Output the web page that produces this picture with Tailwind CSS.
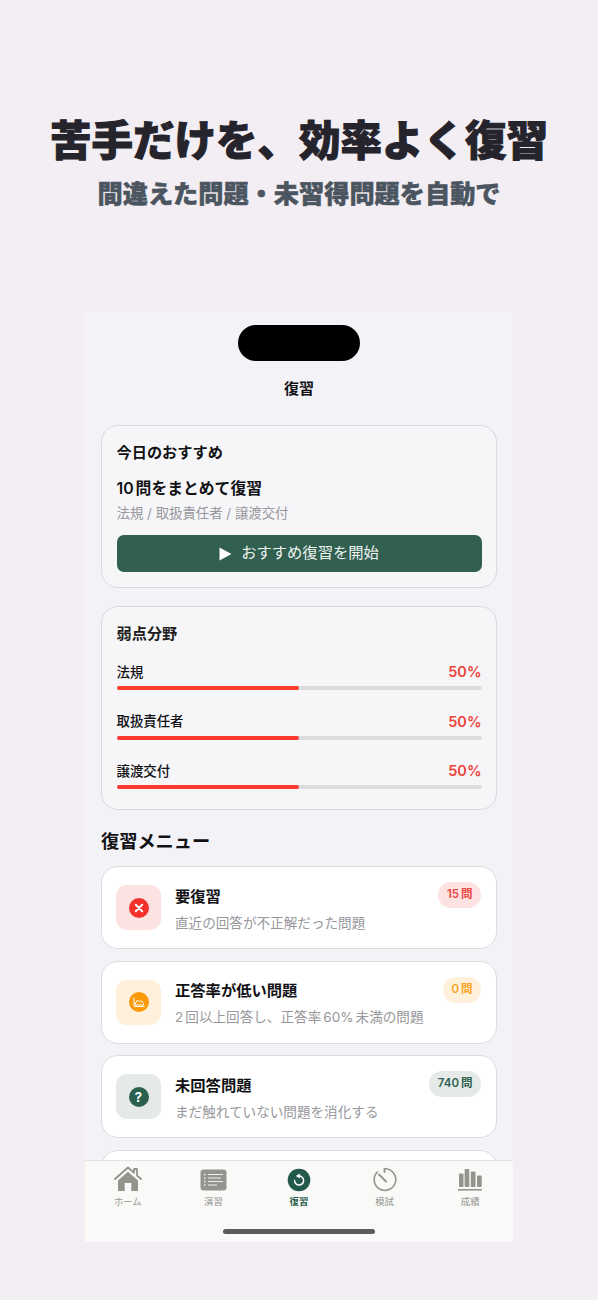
<!DOCTYPE html>
<html lang="ja">
<head>
    <meta charset="UTF-8">
    <meta name="viewport" content="width=device-width, initial-scale=1.0">
    <title>復習</title>
    <script src="https://cdn.jsdelivr.net/npm/@tailwindcss/browser@4"></script>
</head>
<body class="bg-[#f3eef3] font-['Inter','Noto_Sans_CJK_JP',sans-serif] text-[#111114]">
<div class="w-[598px] h-[1300px] overflow-hidden flex flex-col items-center">

    <!-- headline -->
    <h1 class="mt-[108px] h-[60px] leading-[60px] text-[41.5px] font-black text-[#25232b] whitespace-nowrap [-webkit-text-stroke:1px_#25232b] [stroke-linejoin:round] font-['Noto_Sans_CJK_JP',sans-serif]">苦手だけを、効率よく復習</h1>
    <p class="mt-[9px] h-[30px] leading-[30px] text-[25.2px] font-black text-[#4b555f] whitespace-nowrap [-webkit-text-stroke:0.5px_#4b555f] [stroke-linejoin:round] font-['Noto_Sans_CJK_JP',sans-serif]">間違えた問題・未習得問題を自動で</p>

    <!-- phone -->
    <div class="relative mt-[105px] w-[428px] h-[930px] bg-[#f2f2f7] overflow-hidden flex flex-col items-center">
        <div class="mt-[13px] w-[122px] h-[36px] rounded-full bg-black shrink-0"></div>
        <div class="mt-[17px] h-[22px] leading-[22px] text-[15px] font-semibold">復習</div>

        <div class="mt-[25px] w-[396px] flex flex-col">
            <!-- recommend -->
            <section class="h-[163px] rounded-[17px] border border-[#d9d9de] bg-[#f6f6f9] px-[14.5px] pt-[16px]">
                <h2 class="h-[22px] leading-[22px] text-[15.2px] font-semibold">今日のおすすめ</h2>
                <p class="mt-[14px] h-[22px] leading-[22px] text-[15.8px] font-semibold">10<span class="ml-[2px]">問をまとめて復習</span></p>
                <p class="mt-[3px] h-[20px] leading-[20px] text-[13.4px] text-[#97979c]">法規 / 取扱責任者 / 譲渡交付</p>
                <button class="mt-[12px] w-full h-[37px] rounded-[7px] bg-[#315f50] text-[#eef3f0] text-[15.3px] flex items-center justify-center gap-[8px]">
                    <svg width="13" height="14" viewBox="0 0 13 14" class="mr-[1px]"><path d="M0.5 0.5 L12.5 7 L0.5 13.5 Z" fill="#fff"/></svg>
                    おすすめ復習を開始
                </button>
            </section>

            <!-- weak fields -->
            <section class="mt-[18px] h-[204px] rounded-[17px] border border-[#d9d9de] bg-[#f6f6f9] px-[14.5px] pt-[16px]">
                <h2 class="h-[22px] leading-[22px] text-[15.2px] font-semibold text-[#1d1d20]">弱点分野</h2>
                <div class="mt-[17px] flex flex-col gap-[21.5px]">
                    <div>
                        <div class="flex justify-between items-center h-[20px]"><span class="text-[13.4px] font-medium">法規</span><span class="text-[14.5px] font-semibold text-[#ef4238]">50%</span></div>
                        <div class="mt-[4px] h-[4px] rounded-full bg-[#dcdcdf]"><div class="h-full w-1/2 rounded-full bg-[#fb3a30]"></div></div>
                    </div>
                    <div>
                        <div class="flex justify-between items-center h-[20px]"><span class="text-[13.4px] font-medium">取扱責任者</span><span class="text-[14.5px] font-semibold text-[#ef4238]">50%</span></div>
                        <div class="mt-[4px] h-[4px] rounded-full bg-[#dcdcdf]"><div class="h-full w-1/2 rounded-full bg-[#fb3a30]"></div></div>
                    </div>
                    <div>
                        <div class="flex justify-between items-center h-[20px]"><span class="text-[13.4px] font-medium">譲渡交付</span><span class="text-[14.5px] font-semibold text-[#ef4238]">50%</span></div>
                        <div class="mt-[4px] h-[4px] rounded-full bg-[#dcdcdf]"><div class="h-full w-1/2 rounded-full bg-[#fb3a30]"></div></div>
                    </div>
                </div>
            </section>

            <h2 class="mt-[17px] h-[28px] leading-[28px] text-[18.2px] font-semibold">復習メニュー</h2>

            <!-- menu rows -->
            <div class="mt-[11px] flex flex-col gap-[11.5px]">
                <div class="relative h-[83px] rounded-[17px] border border-[#dcdce1] bg-white pl-[14px] flex items-center gap-[14px]">
                    <div class="w-[45px] h-[45px] rounded-[11px] bg-[#fde2e2] flex items-center justify-center shrink-0">
                        <svg width="20" height="20" viewBox="0 0 20 20"><circle cx="10" cy="10" r="10" fill="#f2312c"/><path d="M6.8 6.8 L13.2 13.2 M13.2 6.8 L6.8 13.2" stroke="#fff" stroke-width="2" stroke-linecap="round"/></svg>
                    </div>
                    <div class="flex flex-col pt-[3px]">
                        <span class="h-[22px] leading-[22px] text-[15.3px] font-semibold">要復習</span>
                        <span class="mt-[5px] h-[20px] leading-[20px] text-[13.6px] text-[#97979c]">直近の回答が不正解だった問題</span>
                    </div>
                    <span class="absolute right-[15px] top-[15px] h-[26px] px-[8.5px] rounded-full bg-[#fde2e2] text-[#ea4741] text-[11.5px] font-semibold flex items-center">15<span class="ml-[2px]">問</span></span>
                </div>

                <div class="relative h-[83px] rounded-[17px] border border-[#dcdce1] bg-white pl-[14px] flex items-center gap-[14px]">
                    <div class="w-[45px] h-[45px] rounded-[11px] bg-[#fff0dc] flex items-center justify-center shrink-0">
                        <svg width="20" height="20" viewBox="0 0 20 20"><circle cx="10" cy="10" r="10" fill="#fb9a09"/><path d="M5 5.5 V14.5 H15.5 M6.5 11 L8.5 8 L10.5 10 L12 8.5 L14.5 11.5 V13 H6.5 Z" stroke="#fff" stroke-width="1" fill="none" stroke-linejoin="round"/></svg>
                    </div>
                    <div class="flex flex-col pt-[3px]">
                        <span class="h-[22px] leading-[22px] text-[15.3px] font-semibold">正答率が低い問題</span>
                        <span class="mt-[5px] h-[20px] leading-[20px] text-[13.6px] text-[#97979c]">2<span class="ml-[2px]">回以上回答し、正答率</span><span class="mx-[2px]">60%</span>未満の問題</span>
                    </div>
                    <span class="absolute right-[15px] top-[15px] h-[26px] px-[8.5px] rounded-full bg-[#fff0dc] text-[#f5a623] text-[11.5px] font-semibold flex items-center">0<span class="ml-[2px]">問</span></span>
                </div>

                <div class="relative h-[83px] rounded-[17px] border border-[#dcdce1] bg-white pl-[14px] flex items-center gap-[14px]">
                    <div class="w-[45px] h-[45px] rounded-[11px] bg-[#e5eae8] flex items-center justify-center shrink-0">
                        <div class="w-[20px] h-[20px] rounded-full bg-[#2b5f4e] text-white text-[13px] leading-[20px] font-bold text-center">?</div>
                    </div>
                    <div class="flex flex-col pt-[3px]">
                        <span class="h-[22px] leading-[22px] text-[15.3px] font-semibold">未回答問題</span>
                        <span class="mt-[5px] h-[20px] leading-[20px] text-[13.6px] text-[#97979c]">まだ触れていない問題を消化する</span>
                    </div>
                    <span class="absolute right-[15px] top-[15px] h-[26px] px-[8.5px] rounded-full bg-[#e5eae8] text-[#315f50] text-[11.5px] font-semibold flex items-center">740<span class="ml-[2px]">問</span></span>
                </div>

                <div class="h-[83px] rounded-[17px] border border-[#dcdce1] bg-white"></div>
            </div>
        </div>

        <!-- tab bar -->
        <nav class="absolute left-0 bottom-0 w-full h-[82px] bg-[#f9f9f8] border-t border-[#e3e3e6]">
            <div class="grid grid-cols-5 pt-[5px]">
                <div class="flex flex-col items-center">
                    <svg width="28" height="26" viewBox="0 0 28 26"><path d="M1 13 L14 1.5 L20 6.8 V3 H23 V9.5 L27 13" stroke="#94948c" stroke-width="1.8" fill="none" stroke-linejoin="round" stroke-linecap="round"/><path d="M4 14.5 L14 5.8 L24 14.5 V25 H4 Z M10.7 17 V25 H17.3 V17 Z" fill="#94948c" fill-rule="evenodd"/></svg>
                    <span class="mt-[2px] h-[16px] leading-[16px] text-[9.4px] text-[#94948f]">ホーム</span>
                </div>
                <div class="flex flex-col items-center">
                    <svg width="27" height="26" viewBox="0 0 27 26"><rect x="0.5" y="3.5" width="26" height="21" rx="3" fill="#94948f"/><path d="M4 8.5 H5.5 M4 12 H5.5 M4 15.5 H5.5 M4 19 H5.5" stroke="#eeeeec" stroke-width="1.4"/><path d="M8 8.5 H23 M8 12 H21 M8 15.5 H23 M8 19 H17" stroke="#eeeeec" stroke-width="1.1"/></svg>
                    <span class="mt-[2px] h-[16px] leading-[16px] text-[9.4px] text-[#94948f]">演習</span>
                </div>
                <div class="flex flex-col items-center">
                    <svg width="24" height="26" viewBox="0 0 24 26"><circle cx="12" cy="14" r="11.3" fill="#23594a"/><path d="M12 10 A4.5 4.5 0 1 1 7.6 14.5" stroke="#fff" stroke-width="1.5" fill="none" stroke-linecap="round"/><path d="M12.8 7.4 V12.6 L8.8 10 Z" fill="#fff"/></svg>
                    <span class="mt-[2px] h-[16px] leading-[16px] text-[9.4px] font-semibold text-[#2b5f4e]">復習</span>
                </div>
                <div class="flex flex-col items-center">
                    <svg width="24" height="26" viewBox="0 0 24 26"><path d="M12 2.8 A10.8 10.8 0 1 1 4.3 6" stroke="#94948f" stroke-width="1.6" fill="none" stroke-linecap="round"/><path d="M11.5 2.8 V6 M6 8.5 L13 15.5" stroke="#94948f" stroke-width="1.9" fill="none" stroke-linecap="round"/></svg>
                    <span class="mt-[2px] h-[16px] leading-[16px] text-[9.4px] text-[#94948f]">模試</span>
                </div>
                <div class="flex flex-col items-center">
                    <svg width="26" height="26" viewBox="0 0 26 26"><rect x="2" y="7.5" width="4.5" height="13.5" rx="1" fill="#94948c"/><rect x="7.6" y="3" width="4.7" height="18" rx="1" fill="#94948c"/><rect x="13.8" y="5.5" width="4.7" height="15.5" rx="1" fill="#94948c"/><rect x="20" y="9.5" width="4.7" height="11.5" rx="1" fill="#94948c"/><rect x="1" y="23" width="24" height="1.6" fill="#94948c"/></svg>
                    <span class="mt-[2px] h-[16px] leading-[16px] text-[9.4px] text-[#94948f]">成績</span>
                </div>
            </div>
            <div class="absolute left-[138px] bottom-[8px] w-[152px] h-[5px] rounded-full bg-[#5c5c5e]"></div>
        </nav>
    </div>
</div>
</body>
</html>
